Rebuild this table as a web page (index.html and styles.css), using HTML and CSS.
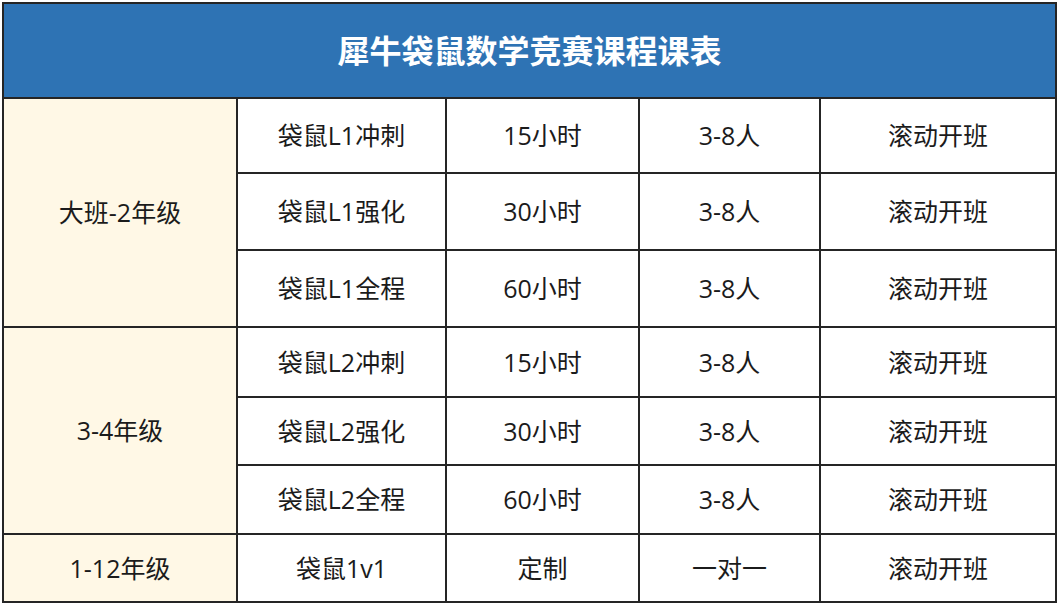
FILE: index.html
```html
<!DOCTYPE html>
<html lang="zh-CN">
<head>
<meta charset="utf-8">
<title>犀牛袋鼠数学竞赛课程课表</title>
<link rel="stylesheet" href="styles.css">
</head>
<body>
<div class="sheet">
  <div class="title">犀牛袋鼠数学竞赛课程课表</div>

  <div class="grade g1">大班-2年级</div>
  <div class="cell">袋鼠L1冲刺</div><div class="cell">15小时</div><div class="cell">3-8人</div><div class="cell">滚动开班</div>
  <div class="cell">袋鼠L1强化</div><div class="cell">30小时</div><div class="cell">3-8人</div><div class="cell">滚动开班</div>
  <div class="cell">袋鼠L1全程</div><div class="cell">60小时</div><div class="cell">3-8人</div><div class="cell">滚动开班</div>

  <div class="grade g2">3-4年级</div>
  <div class="cell">袋鼠L2冲刺</div><div class="cell">15小时</div><div class="cell">3-8人</div><div class="cell">滚动开班</div>
  <div class="cell">袋鼠L2强化</div><div class="cell">30小时</div><div class="cell">3-8人</div><div class="cell">滚动开班</div>
  <div class="cell">袋鼠L2全程</div><div class="cell">60小时</div><div class="cell">3-8人</div><div class="cell">滚动开班</div>

  <div class="grade g3">1-12年级</div>
  <div class="cell">袋鼠1v1</div><div class="cell">定制</div><div class="cell">一对一</div><div class="cell">滚动开班</div>
</div>
</body>
</html>
```

FILE: styles.css
```css
html, body {
  margin: 0;
  padding: 0;
  background: #ffffff;
}

body {
  padding: 2px 0 0 2px;
  font-family: "Open Sans", "Noto Sans CJK SC", sans-serif;
  color: #1b1b1b;
}

.sheet {
  display: grid;
  width: 1055px;
  box-sizing: border-box;
  grid-template-columns: 232px 207px 191px 179px 234px;
  grid-template-rows: 93px 73px 75px 75px 68px 66px 67px 66px;
  gap: 2px;
  padding: 2px;
  background: #252525;
}

.sheet > div {
  display: flex;
  align-items: center;
  justify-content: center;
  font-size: 25px;
  line-height: 1;
}

.title {
  grid-column: 1 / -1;
  background: #2e73b4;
  color: #ffffff;
  font-weight: 700;
  font-size: 32px !important;
}

.cell {
  background: #ffffff;
}

.grade {
  grid-column: 1;
  background: #fff8e6;
}

.g1 { grid-row: 2 / span 3; }
.g2 { grid-row: 5 / span 3; }
.g3 { grid-row: 8 / span 1; }
```
